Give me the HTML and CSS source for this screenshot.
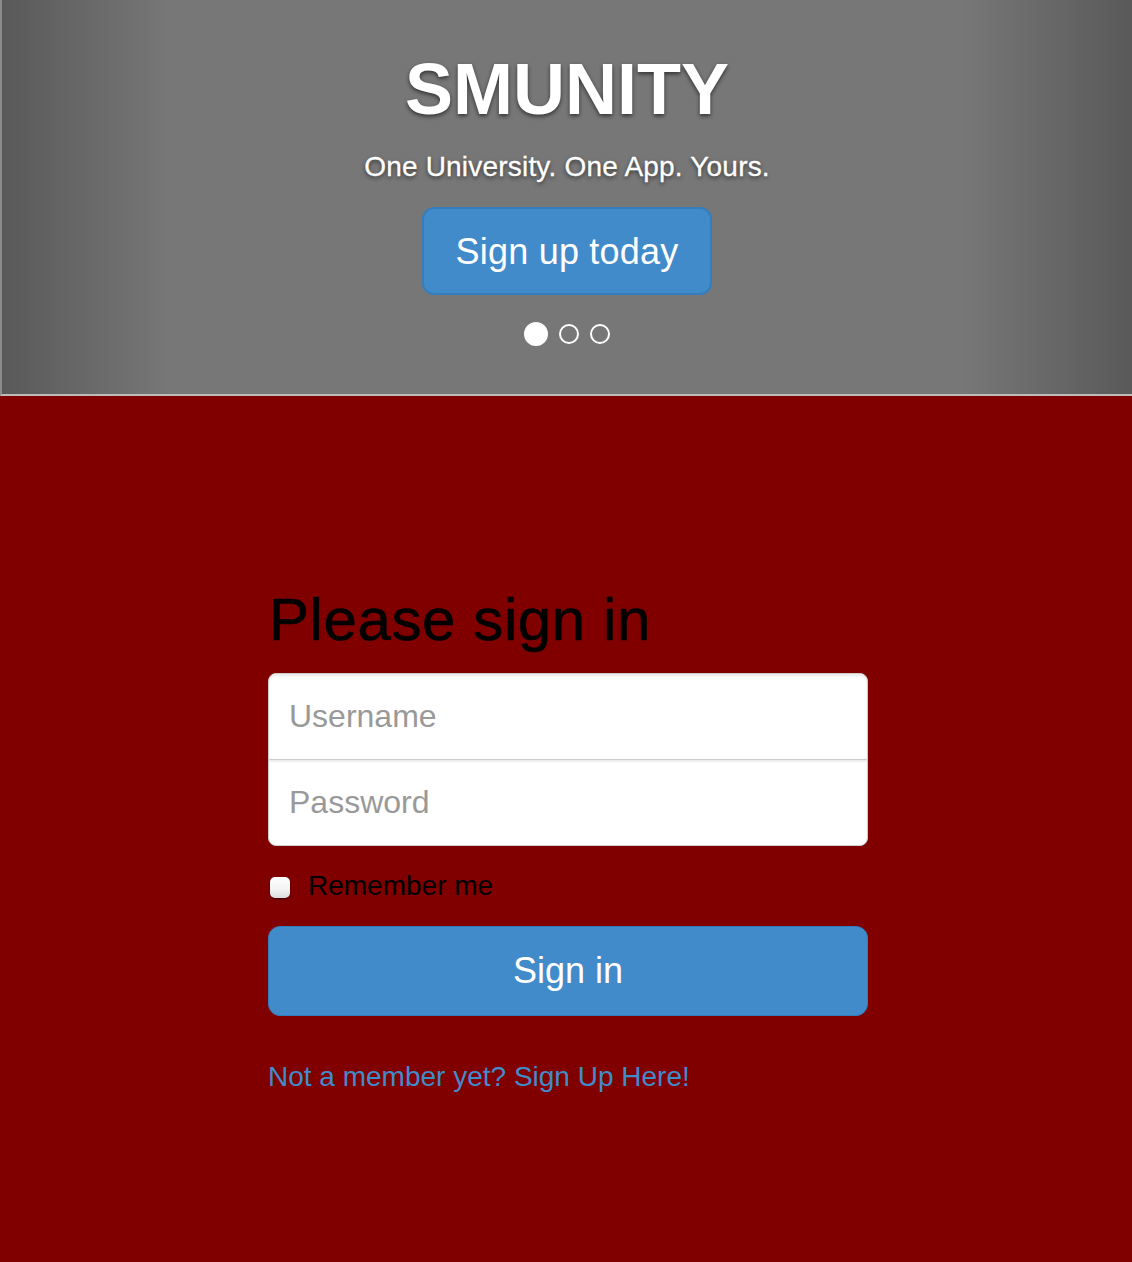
FILE: index.html
```html
<!DOCTYPE html>
<html lang="en">
<head>
<meta charset="utf-8">
<title>SMUNITY</title>
<link rel="stylesheet" href="styles.css">
</head>
<body>
  <header class="carousel">
    <h1 class="brand">SMUNITY</h1>
    <p class="tagline">One University. One App. Yours.</p>
    <a class="btn btn-hero" href="#">Sign up today</a>
    <ol class="indicators">
      <li class="dot active"></li>
      <li class="dot"></li>
      <li class="dot"></li>
    </ol>
  </header>
  <main class="signin-area">
    <form class="signin">
      <h2 class="signin-heading">Please sign in</h2>
      <input class="field field-top" type="text" placeholder="Username">
      <input class="field field-bottom" type="password" placeholder="Password">
      <label class="remember"><input class="check" type="checkbox"> Remember me</label>
      <button class="btn btn-block" type="submit">Sign in</button>
      <a class="member-link" href="#">Not a member yet? Sign Up Here!</a>
    </form>
  </main>
</body>
</html>
```
FILE: styles.css
```css
* { box-sizing: border-box; }
html, body { margin: 0; padding: 0; }
body {
  font-family: "Liberation Sans", Arial, Helvetica, sans-serif;
  min-height: 100vh;
  display: flex;
  flex-direction: column;
  background: #800000;
}

.carousel {
  height: 396px;
  padding-top: 49px;
  border-left: 2px solid #8c8c8c;
  border-bottom: 2px solid #bcbcbc;
  background:
    linear-gradient(to right, rgba(0,0,0,.25) 0, rgba(0,0,0,0) 168px, rgba(0,0,0,0) calc(100% - 170px), rgba(0,0,0,.25) 100%),
    #777;
  display: flex;
  flex-direction: column;
  align-items: center;
  color: #fff;
  text-shadow: 0 2px 4px rgba(0,0,0,.6);
}
.brand {
  margin: 0;
  font-size: 72px;
  line-height: 80px;
  font-weight: bold;
}
.tagline {
  margin: 18px 0 0;
  font-size: 28px;
  line-height: 40px;
  letter-spacing: 0.2px;
  -webkit-text-stroke: 0.3px #fff;
}
.btn {
  display: inline-block;
  background: #428bca;
  border: 1px solid #357ebd;
  color: #fff;
  font-family: inherit;
  text-decoration: none;
  text-align: center;
  text-shadow: none;
  cursor: pointer;
}
.btn-hero {
  margin-top: 20px;
  height: 88px;
  padding: 23px 32px;
  font-size: 36px;
  line-height: 40px;
  border-width: 2px;
  border-radius: 12px;
  letter-spacing: 0.2px;
}
.indicators {
  list-style: none;
  margin: 27px 0 0;
  padding: 0;
  display: flex;
  align-items: center;
  gap: 11px;
  height: 24px;
}
.dot {
  width: 20px;
  height: 20px;
  border: 2px solid #fff;
  border-radius: 50%;
}
.dot.active {
  width: 24px;
  height: 24px;
  background: #fff;
}

.signin-area {
  flex: 1;
  padding: 191px 0 0 4px;
}
.signin {
  width: 600px;
  margin: 0 auto;
  display: flex;
  flex-direction: column;
}
.signin-heading {
  margin: 0 0 20px;
  font-size: 60px;
  line-height: 66px;
  font-weight: 500;
  color: #000;
  padding-left: 1px;
  letter-spacing: 0.6px;
  -webkit-text-stroke: 0.6px #000;
}
.field {
  display: block;
  width: 100%;
  height: 87px;
  padding: 0 20px;
  font-family: inherit;
  font-size: 32px;
  color: #555;
  background: #fff;
  border: 1px solid #ccc;
  box-shadow: inset 0 2px 2px rgba(0,0,0,.075);
  outline: none;
}
.field::placeholder { color: #999; }
.field-top {
  border-radius: 8px 8px 0 0;
  margin-bottom: -1px;
}
.field-bottom {
  border-radius: 0 0 8px 8px;
  margin-bottom: 20px;
}
.remember {
  display: flex;
  align-items: center;
  gap: 18px;
  height: 40px;
  font-size: 28px;
  line-height: 40px;
  color: #000;
  margin-bottom: 20px;
  padding-left: 2px;
}
.check {
  appearance: none;
  -webkit-appearance: none;
  margin: 2px 0 0;
  width: 20px;
  height: 21px;
  border-radius: 5px;
  background: linear-gradient(#ffffff 0%, #f4f4f4 55%, #dcdcdc 100%);
  box-shadow: 0 1px 2px rgba(0,0,0,.6);
}
.btn-block {
  width: 100%;
  height: 90px;
  padding: 20px 16px;
  font-size: 36px;
  line-height: 48px;
  border-radius: 12px;
}
.member-link {
  margin-top: 41px;
  font-size: 28px;
  line-height: 40px;
  color: #428bca;
  text-decoration: none;
  align-self: flex-start;
}
```
